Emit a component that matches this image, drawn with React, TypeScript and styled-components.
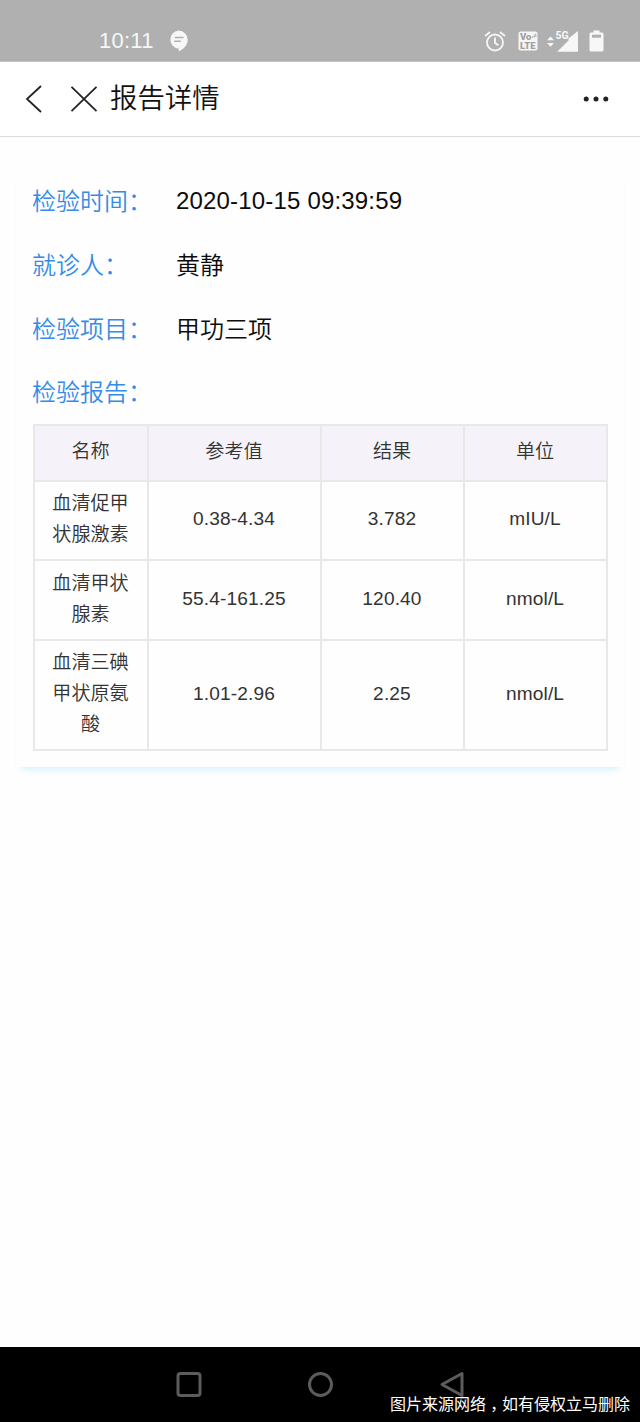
import React from 'react';
import styled, { createGlobalStyle } from 'styled-components';

const GlobalStyle = createGlobalStyle`
  * { box-sizing: border-box; }
  body {
    margin: 0;
    background: #fefefe;
    font-family: "Liberation Sans", "Noto Sans CJK SC", sans-serif;
    font-weight: 350;
  }
`;

const Screen = styled.div`
  display: flex;
  flex-direction: column;
  width: 640px;
  height: 1422px;
  overflow: hidden;
`;

const StatusBar = styled.header`
  display: flex;
  align-items: center;
  justify-content: space-between;
  flex: none;
  height: 62px;
  padding: 20px 36px 0 99px;
  background: #b0b0b0;
  border-bottom: 1px solid #c4c4c4;
  color: #f7f7f7;
`;

const StatusGroup = styled.div`
  display: flex;
  align-items: center;
`;

const Clock = styled.span`
  width: 70px;
  font-size: 22px;
  line-height: 26px;
  letter-spacing: 0.25px;
`;

const TitleBar = styled.nav`
  display: flex;
  align-items: center;
  flex: none;
  height: 75px;
  padding: 0 31px 0 25px;
  background: #fff;
  border-bottom: 1px solid #dcdcdc;
`;

const Title = styled.h1`
  flex: 1;
  margin: 0 0 0 12px;
  font-size: 27.4px;
  font-weight: 350;
  line-height: 40px;
  color: #111;
`;

const Glyph = styled.svg<{ $gap?: number }>`
  display: block;
  flex: none;
  margin-left: ${(p) => p.$gap ?? 0}px;
`;

const Content = styled.main`
  flex: 1;
  padding: 32px 16px 0;
`;

const Card = styled.section`
  height: 598px;
  padding: 0 16px 0 17px;
  background: #fefefe;
  box-shadow: 0 8px 8px -6px #d3eefb, 0 0 4px #f9fdfe;
`;

const Field = styled.div`
  display: flex;
  height: 64px;
  align-items: center;
  font-size: 24px;
  line-height: 36px;
`;

const Label = styled.span<{ $drop: number }>`
  width: 143px;
  margin-left: -1px;
  padding-top: ${(p) => p.$drop}px;
  color: #358ce8;
`;

const Value = styled.span<{ $tracking?: number }>`
  margin-left: 1px;
  padding-top: ${(p) => (p.$tracking ? 0 : 2)}px;
  letter-spacing: ${(p) => p.$tracking ?? 0}px;
  color: #0c0c0c;
`;

const Report = styled.table`
  width: 575px;
  margin-top: -1px;
  border-collapse: collapse;
  table-layout: fixed;
  font-size: 19.1px;
  line-height: 31px;
  text-align: center;
  color: #333;
`;

const Row = styled.tr<{ $height: number }>`
  height: ${(p) => p.$height}px;
`;

const HeadCell = styled.th<{ $width: number }>`
  width: ${(p) => p.$width}px;
  padding: 0 1px 4px 0;
  border: 2px solid #e8e8e9;
  background: #f5f3f9;
  font-weight: 350;
`;

const Cell = styled.td`
  padding: 0 1px 4px 0;
  border: 2px solid #e8e8e9;
  letter-spacing: 0.15px;
  white-space: nowrap;
`;

const NameCell = styled(Cell)`
  padding: 0 17px 3px 16px;
  letter-spacing: 0;
  white-space: normal;
`;

const NavBar = styled.footer`
  position: relative;
  display: flex;
  justify-content: space-between;
  flex: none;
  height: 75px;
  padding: 23px 174px 0 175px;
  background: #000;
`;

const Notice = styled.p`
  position: absolute;
  right: 10px;
  bottom: 5px;
  margin: 0;
  font-size: 16px;
  line-height: 24px;
  font-weight: 400;
  color: #fff;
`;

const Comma = styled.span`
  font-family: "Noto Sans CJK TC", sans-serif;
  line-height: 0;
  vertical-align: -5px;
`;

const columns = [
  { title: '名称', width: 114 },
  { title: '参考值', width: 173 },
  { title: '结果', width: 143 },
  { title: '单位', width: 143 },
];

const results = [
  { name: '血清促甲状腺激素', range: '0.38-4.34', value: '3.782', unit: 'mIU/L', height: 79 },
  { name: '血清甲状腺素', range: '55.4-161.25', value: '120.40', unit: 'nmol/L', height: 80 },
  { name: '血清三碘甲状原氨酸', range: '1.01-2.96', value: '2.25', unit: 'nmol/L', height: 110 },
];

const fields = [
  { label: '检验时间：', value: '2020-10-15 09:39:59', tracking: 0.18, drop: 2 },
  { label: '就诊人：', value: '黄静', drop: 2 },
  { label: '检验项目：', value: '甲功三项', drop: 2 },
  { label: '检验报告：', value: '', drop: 0 },
];

const ChatIcon = () => (
  <Glyph width="19" height="22" viewBox="0 0 19 22">
    <path d="M9.5 0.5a9.2 9.2 0 0 1 9.2 9.2c0 5-3.6 9.3-9 11.6v-2.5A9.2 9.2 0 0 1 9.5.5z" fill="#f7f7f7" />
    <path d="M5.8 7.6h8.8M5.2 11.3h6.6" stroke="#b0b0b0" strokeWidth="1.5" />
  </Glyph>
);

const AlarmIcon = () => (
  <Glyph width="22" height="22" viewBox="0 0 22 22" fill="none" stroke="#f5f5f5" strokeWidth="1.9">
    <circle cx="11" cy="12.5" r="8" />
    <path d="M11 7.5v5.4l3.4 2.3M1 6.1l5-4.1M21 6.1l-5-4.1" />
  </Glyph>
);

const VolteIcon = () => (
  <Glyph $gap={12} width="20" height="20" viewBox="0 0 20 20">
    <rect x="0.5" y="0.5" width="19" height="19" rx="2" fill="#f5f5f5" />
    <g fill="#a0a0a0" fontFamily="Roboto, sans-serif" fontWeight="900">
      <text x="2" y="9" fontSize="9.5">Vo</text>
      <text x="2" y="18" fontSize="9.5">LTE</text>
    </g>
    <path d="M14.8 7V5M16.3 6.500V3.500M17.800 6V2.500" stroke="#a6a6a6" strokeWidth="0.900" />
  </Glyph>
);

const SignalIcon = () => (
  <Glyph $gap={8} width="33" height="24" viewBox="0 0 33 24" fill="#f7f7f7">
    <path d="M1 11.3L4.5 7.5 8 11.3zM1 14L4.5 17.8 8 14z" />
    <path d="M32 2v20.8H11.2L22.5 11.5v-2z" />
    <text x="9.500" y="9.500" fontSize="10.5" fontWeight="700" fontFamily="Roboto, sans-serif">5G</text>
  </Glyph>
);

const BatteryIcon = () => (
  <Glyph $gap={10} width="15" height="22" viewBox="0 0 15 22">
    <path d="M4.5 0.5h6v2H13a1.5 1.5 0 0 1 1.5 1.5v16a1.5 1.5 0 0 1-1.5 1.5H2A1.5 1.5 0 0 1 .5 20V4A1.5 1.5 0 0 1 2 2.500h2.500z" fill="#f7f7f7" />
    <path d="M3 4.700h9v3H3z" fill="#b0b0b0" />
  </Glyph>
);

export default function App() {
  return (
    <>
      <GlobalStyle />
      <Screen>
        <StatusBar>
          <StatusGroup>
            <Clock>10:11</Clock>
            <ChatIcon />
          </StatusGroup>
          <StatusGroup>
            <AlarmIcon />
            <VolteIcon />
            <SignalIcon />
            <BatteryIcon />
          </StatusGroup>
        </StatusBar>
        <TitleBar>
          <Glyph width="17" height="28" viewBox="0 0 17 28" fill="none" stroke="#222" strokeWidth="1.8">
            <path d="M16 1L2 14l14 13" />
          </Glyph>
          <Glyph $gap={28} width="28" height="28" viewBox="0 0 28 28" stroke="#222" strokeWidth="1.8">
            <path d="M1.500 1.800l25 24.400M26.500 1.800l-25 24.400" />
          </Glyph>
          <Title>报告详情</Title>
          <Glyph width="26" height="6" viewBox="0 0 26 6" fill="#222">
            <circle cx="3.200" cy="3" r="2.500" />
            <circle cx="13" cy="3" r="2.500" />
            <circle cx="22.800" cy="3" r="2.500" />
          </Glyph>
        </TitleBar>
        <Content>
          <Card>
            {fields.map((f) => (
              <Field key={f.label}>
                <Label $drop={f.drop}>{f.label}</Label>
                <Value $tracking={f.tracking}>{f.value}</Value>
              </Field>
            ))}
            <Report>
              <thead>
                <Row $height={56}>
                  {columns.map((c) => (
                    <HeadCell key={c.title} $width={c.width}>{c.title}</HeadCell>
                  ))}
                </Row>
              </thead>
              <tbody>
                {results.map((r) => (
                  <Row key={r.name} $height={r.height}>
                    <NameCell>{r.name}</NameCell>
                    <Cell>{r.range}</Cell>
                    <Cell>{r.value}</Cell>
                    <Cell>{r.unit}</Cell>
                  </Row>
                ))}
              </tbody>
            </Report>
          </Card>
        </Content>
        <NavBar>
          <Glyph width="28" height="28" viewBox="0 0 28 28" fill="none" stroke="#5c5c5c" strokeWidth="3">
            <rect x="3" y="3.500" width="22" height="22" rx="2.500" />
          </Glyph>
          <Glyph width="28" height="28" viewBox="0 0 28 28" fill="none" stroke="#5c5c5c" strokeWidth="3">
            <circle cx="13.500" cy="14.500" r="11" />
          </Glyph>
          <Glyph width="28" height="28" viewBox="0 0 28 28" fill="none" stroke="#5c5c5c" strokeWidth="3" strokeLinejoin="round">
            <path d="M24 3.500v22L4 14.500z" />
          </Glyph>
          <Notice>图片来源网络<Comma lang="zh-TW">，</Comma>如有侵权立马删除</Notice>
        </NavBar>
      </Screen>
    </>
  );
}
